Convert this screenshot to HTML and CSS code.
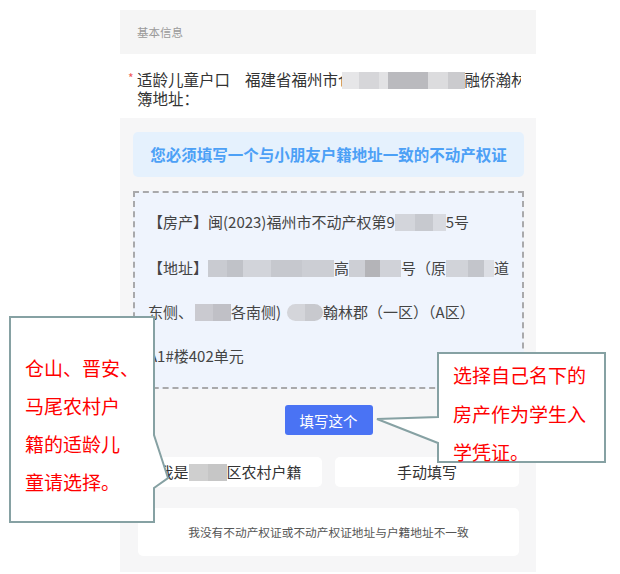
FILE: index.html
```html
<!DOCTYPE html>
<html lang="zh-CN">
<head>
<meta charset="utf-8">
<title>基本信息</title>
<link rel="stylesheet" href="styles.css">
</head>
<body>
<div class="page">
  <div class="panel">
    <div class="sec-head">基本信息</div>
    <div class="field">
      <span class="star">*</span>
      <div class="label">适龄儿童户口簿地址：</div>
      <div class="value">福建省福州市仓<span class="blur blur-top"></span>融侨瀚林郡</div>
    </div>
    <div class="body">
      <div class="notice">您必须填写一个与小朋友户籍地址一致的不动产权证</div>
      <div class="cert">
        <div class="line first">【房产】闽(2023)福州市不动产权第9<span class="blur blur-a"></span>5号</div>
        <div class="line">【地址】<span class="blur blur-b"></span>高<span class="blur blur-c"></span>号（原<span class="blur blur-d"></span>道</div>
        <div class="line">东侧、<span class="blur blur-e"></span>各南侧)<span class="blur blur-pill"></span>翰林郡（一区）（A区）</div>
        <div class="line">A1#楼402单元</div>
      </div>
      <div class="act"><button class="btn-primary">填写这个</button></div>
      <div class="choices">
        <div class="choice">我是<span class="blur blur-f"></span>区农村户籍</div>
        <div class="choice">手动填写</div>
      </div>
      <div class="none">我没有不动产权证或不动产权证地址与户籍地址不一致</div>
    </div>
  </div>

  <svg class="callouts" width="620" height="574" viewBox="0 0 620 574">
    <polygon points="10,317 154,317 154,435 168,478 154,488 154,522 10,522" />
    <polygon points="438,353 605,353 605,462 438,462 438,443 377,419 438,417" />
  </svg>
  <div class="note note-left">仓山、晋安、<br>马尾农村户<br>籍的适龄儿<br>童请选择。</div>
  <div class="note note-right">选择自己名下的<br>房产作为学生入<br>学凭证。</div>
</div>
</body>
</html>
```

FILE: styles.css
```css
html, body {
  margin: 0;
  padding: 0;
  background: #ffffff;
}

body {
  font-family: "Noto Sans CJK SC", "Noto Sans", sans-serif;
  color: #333333;
}

.page {
  position: relative;
  width: 620px;
  height: 574px;
  overflow: hidden;
}

.panel {
  margin-left: 120px;
  margin-top: 10px;
  width: 416px;
}

.sec-head {
  height: 44px;
  line-height: 44px;
  background: #f5f5f5;
  padding-left: 17px;
  font-size: 11.5px;
  color: #9a9a9a;
}

.field {
  display: flex;
  height: 64px;
  box-sizing: border-box;
  padding: 16px 15px 0 8px;
  background: #ffffff;
  font-size: 15.5px;
  line-height: 19px;
  color: #333333;
}

.star {
  width: 9px;
  flex: none;
  color: #f05a5a;
  font-size: 12px;
  line-height: 16px;
}

.label {
  width: 94px;
  flex: none;
  margin-right: 14px;
}

.value {
  flex: 1;
  white-space: nowrap;
  overflow: hidden;
}

.blur {
  display: inline-block;
  height: 17px;
  vertical-align: -3px;
}

.blur-top {
  width: 123px;
  margin-left: -12px;
  background: linear-gradient(90deg, #e6e6e8 0 14%, #d6d6d9 14% 30%, #e2e2e4 30% 37%, #bababe 37% 70%, #dcdcde 70% 86%, #cbcbce 86% 100%);
}

.body {
  background: #f6f6f7;
  padding: 14px 12px 16px 13px;
}

.notice {
  height: 45px;
  line-height: 45px;
  border-radius: 5px;
  background: #e5f1fd;
  color: #4ca0f6;
  font-size: 15.5px;
  font-weight: 700;
  text-align: center;
}

.cert {
  margin-top: 14px;
  height: 198px;
  box-sizing: border-box;
  border: 2px dashed #a9a9ab;
  background: #eff4fd;
  padding: 7px 10px 9px 13px;
  font-size: 15px;
  line-height: 44px;
  color: #444444;
}

.line {
  white-space: nowrap;
  overflow: hidden;
}

.line.first {
  margin-bottom: 2px;
}

.blur-a {
  width: 51px;
  background: linear-gradient(90deg, #d3d5db 0 40%, #c7c9cf 40% 75%, #d8dae0 75% 100%);
}

.blur-b {
  width: 126px;
  background: linear-gradient(90deg, #c9cbd1 0 15%, #c0c2c8 15% 28%, #d2d4da 28% 50%, #c6c8ce 50% 75%, #ccced4 75% 100%);
}

.blur-c {
  width: 52px;
  background: linear-gradient(90deg, #cdcfd5 0 30%, #b4b4b8 30% 60%, #d0d2d8 60% 100%);
}

.blur-d {
  width: 48px;
  background: linear-gradient(90deg, #d1d3d9 0 45%, #c3c5cb 45% 80%, #dcdee4 80% 100%);
}

.blur-e {
  width: 36px;
  margin-left: 2px;
  background: linear-gradient(90deg, #cacad0 0 50%, #c0c0c6 50% 100%);
}

.blur-pill {
  width: 36px;
  margin-left: 6px;
  border-radius: 9px;
  background: linear-gradient(90deg, #d4d5da 0 50%, #c8c9ce 50% 100%);
}

.act {
  display: flex;
  justify-content: center;
  margin-top: 16px;
}

.btn-primary {
  width: 88px;
  height: 30px;
  border: none;
  border-radius: 3px;
  background: #4a73f4;
  color: #ffffff;
  font-family: "Noto Sans CJK SC", sans-serif;
  font-size: 14.5px;
  padding: 0;
}

.choices {
  display: grid;
  grid-template-columns: 1fr 1fr;
  gap: 13px;
  margin: 22px 5px 0;
}

.choice {
  height: 30px;
  line-height: 30px;
  border-radius: 5px;
  background: #ffffff;
  text-align: center;
  font-size: 15px;
  color: #333333;
  white-space: nowrap;
}

.blur-f {
  width: 38px;
  background: linear-gradient(90deg, #cfcfcf 0 50%, #c6c6c6 50% 100%);
}

.none {
  margin: 21px 5px 0;
  height: 48px;
  line-height: 48px;
  border-radius: 5px;
  background: #ffffff;
  text-align: center;
  font-size: 11.7px;
  color: #555555;
}

.callouts {
  position: absolute;
  left: 0;
  top: 0;
  pointer-events: none;
}

.callouts polygon {
  fill: #ffffff;
  stroke: #86a1a3;
  stroke-width: 2;
  stroke-linejoin: miter;
}

.note {
  position: absolute;
  font-family: "Noto Sans CJK SC", sans-serif;
  font-size: 19px;
  line-height: 38px;
  color: #ff0000;
  white-space: nowrap;
}

.note-left {
  left: 25px;
  top: 349px;
}

.note-right {
  left: 453px;
  top: 356px;
  line-height: 38.5px;
}
```
